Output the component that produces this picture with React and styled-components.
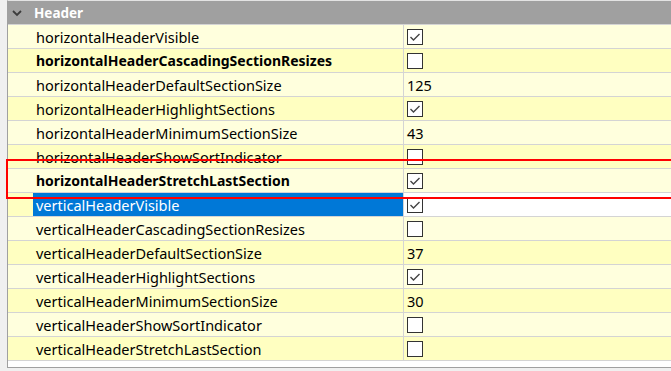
import React from 'react'
import styled, { createGlobalStyle } from 'styled-components'

const GlobalStyle = createGlobalStyle`
  html, body {
    margin: 0;
    padding: 0;
    background: #f0f0f0;
    overflow: hidden;
  }
  body {
    font-family: "Noto Sans", "Liberation Sans", sans-serif;
    font-size: 14.5px;
  }
`

const Window = styled.div`
  position: relative;
  width: 671px;
  height: 371px;
  background: #f0f0f0;
  padding-left: 7px;
  box-sizing: border-box;
`

const Frame = styled.div`
  background: #fff;
  border-left: 1px solid #a0a0a0;
  border-bottom: 1px solid #a0a0a0;
  border-top: 1px solid #e3e3e3;
  padding-bottom: 6px;
`

const GroupHeader = styled.div`
  height: 23px;
  background: #a0a0a0;
  border-bottom: 1px solid #d4d4d4;
  display: flex;
  align-items: center;
  gap: 12px;
  padding-left: 4px;
  color: #fff;
  font-weight: bold;
  font-size: 13.5px;
`

const Chevron = () => (
  <svg width="10" height="8" viewBox="0 0 10 8">
    <polyline points="1,2 5,6 9,2" fill="none" stroke="#3c3c3c" strokeWidth="1.8" />
  </svg>
)

const Row = styled.div`
  display: grid;
  grid-template-columns: 25px 371px 1fr;
  height: 23px;
  border-bottom: 1px solid #d4d4d4;
  background: ${p => (p.$alt ? '#ffffc1' : '#ffffdd')};
`

const Name = styled.div`
  display: flex;
  align-items: center;
  padding-left: 3px;
  font-weight: ${p => (p.$bold ? 'bold' : 'normal')};
  font-size: ${p => (p.$bold ? '14px' : '14.5px')};
  background: ${p => (p.$selected ? '#0078d7' : 'transparent')};
  color: ${p => (p.$selected ? '#fff' : '#000')};
  border-right: 1px solid #d4d4d4;
  white-space: nowrap;
`

const Value = styled.div`
  display: flex;
  align-items: center;
  padding-left: 3px;
  background: ${p => (p.$selected ? '#fff' : 'transparent')};
  color: #000;
`

const Box = styled.div`
  width: 14px;
  height: 14px;
  border: 1px solid #333;
  background: #fff;
  display: flex;
  align-items: center;
  justify-content: center;
`

const Checkbox = ({ checked }) => (
  <Box>
    {checked && (
      <svg width="12" height="12" viewBox="0 0 12 12">
        <polyline points="1.5,6 4.5,9 10.5,3" fill="none" stroke="#444" strokeWidth="1.4" />
      </svg>
    )}
  </Box>
)

const Highlight = styled.div`
  position: absolute;
  left: 6px;
  top: 159px;
  width: 680px;
  height: 36px;
  border: 2px solid #ff0000;
  pointer-events: none;
`

const props = [
  { name: 'horizontalHeaderVisible', check: true },
  { name: 'horizontalHeaderCascadingSectionResizes', check: false, bold: true },
  { name: 'horizontalHeaderDefaultSectionSize', value: '125' },
  { name: 'horizontalHeaderHighlightSections', check: true },
  { name: 'horizontalHeaderMinimumSectionSize', value: '43' },
  { name: 'horizontalHeaderShowSortIndicator', check: false },
  { name: 'horizontalHeaderStretchLastSection', check: true, bold: true },
  { name: 'verticalHeaderVisible', check: true, selected: true },
  { name: 'verticalHeaderCascadingSectionResizes', check: false },
  { name: 'verticalHeaderDefaultSectionSize', value: '37' },
  { name: 'verticalHeaderHighlightSections', check: true },
  { name: 'verticalHeaderMinimumSectionSize', value: '30' },
  { name: 'verticalHeaderShowSortIndicator', check: false },
  { name: 'verticalHeaderStretchLastSection', check: false },
]

export default function App() {
  return (
    <Window>
      <GlobalStyle />
      <Frame>
        <GroupHeader>
          <Chevron />
          Header
        </GroupHeader>
        {props.map((p, i) => (
          <Row key={p.name} $alt={i % 2 === 1}>
            <span />
            <Name $bold={p.bold} $selected={p.selected}>{p.name}</Name>
            <Value $selected={p.selected}>
              {p.value !== undefined ? p.value : <Checkbox checked={p.check} />}
            </Value>
          </Row>
        ))}
      </Frame>
      <Highlight />
    </Window>
  )
}
